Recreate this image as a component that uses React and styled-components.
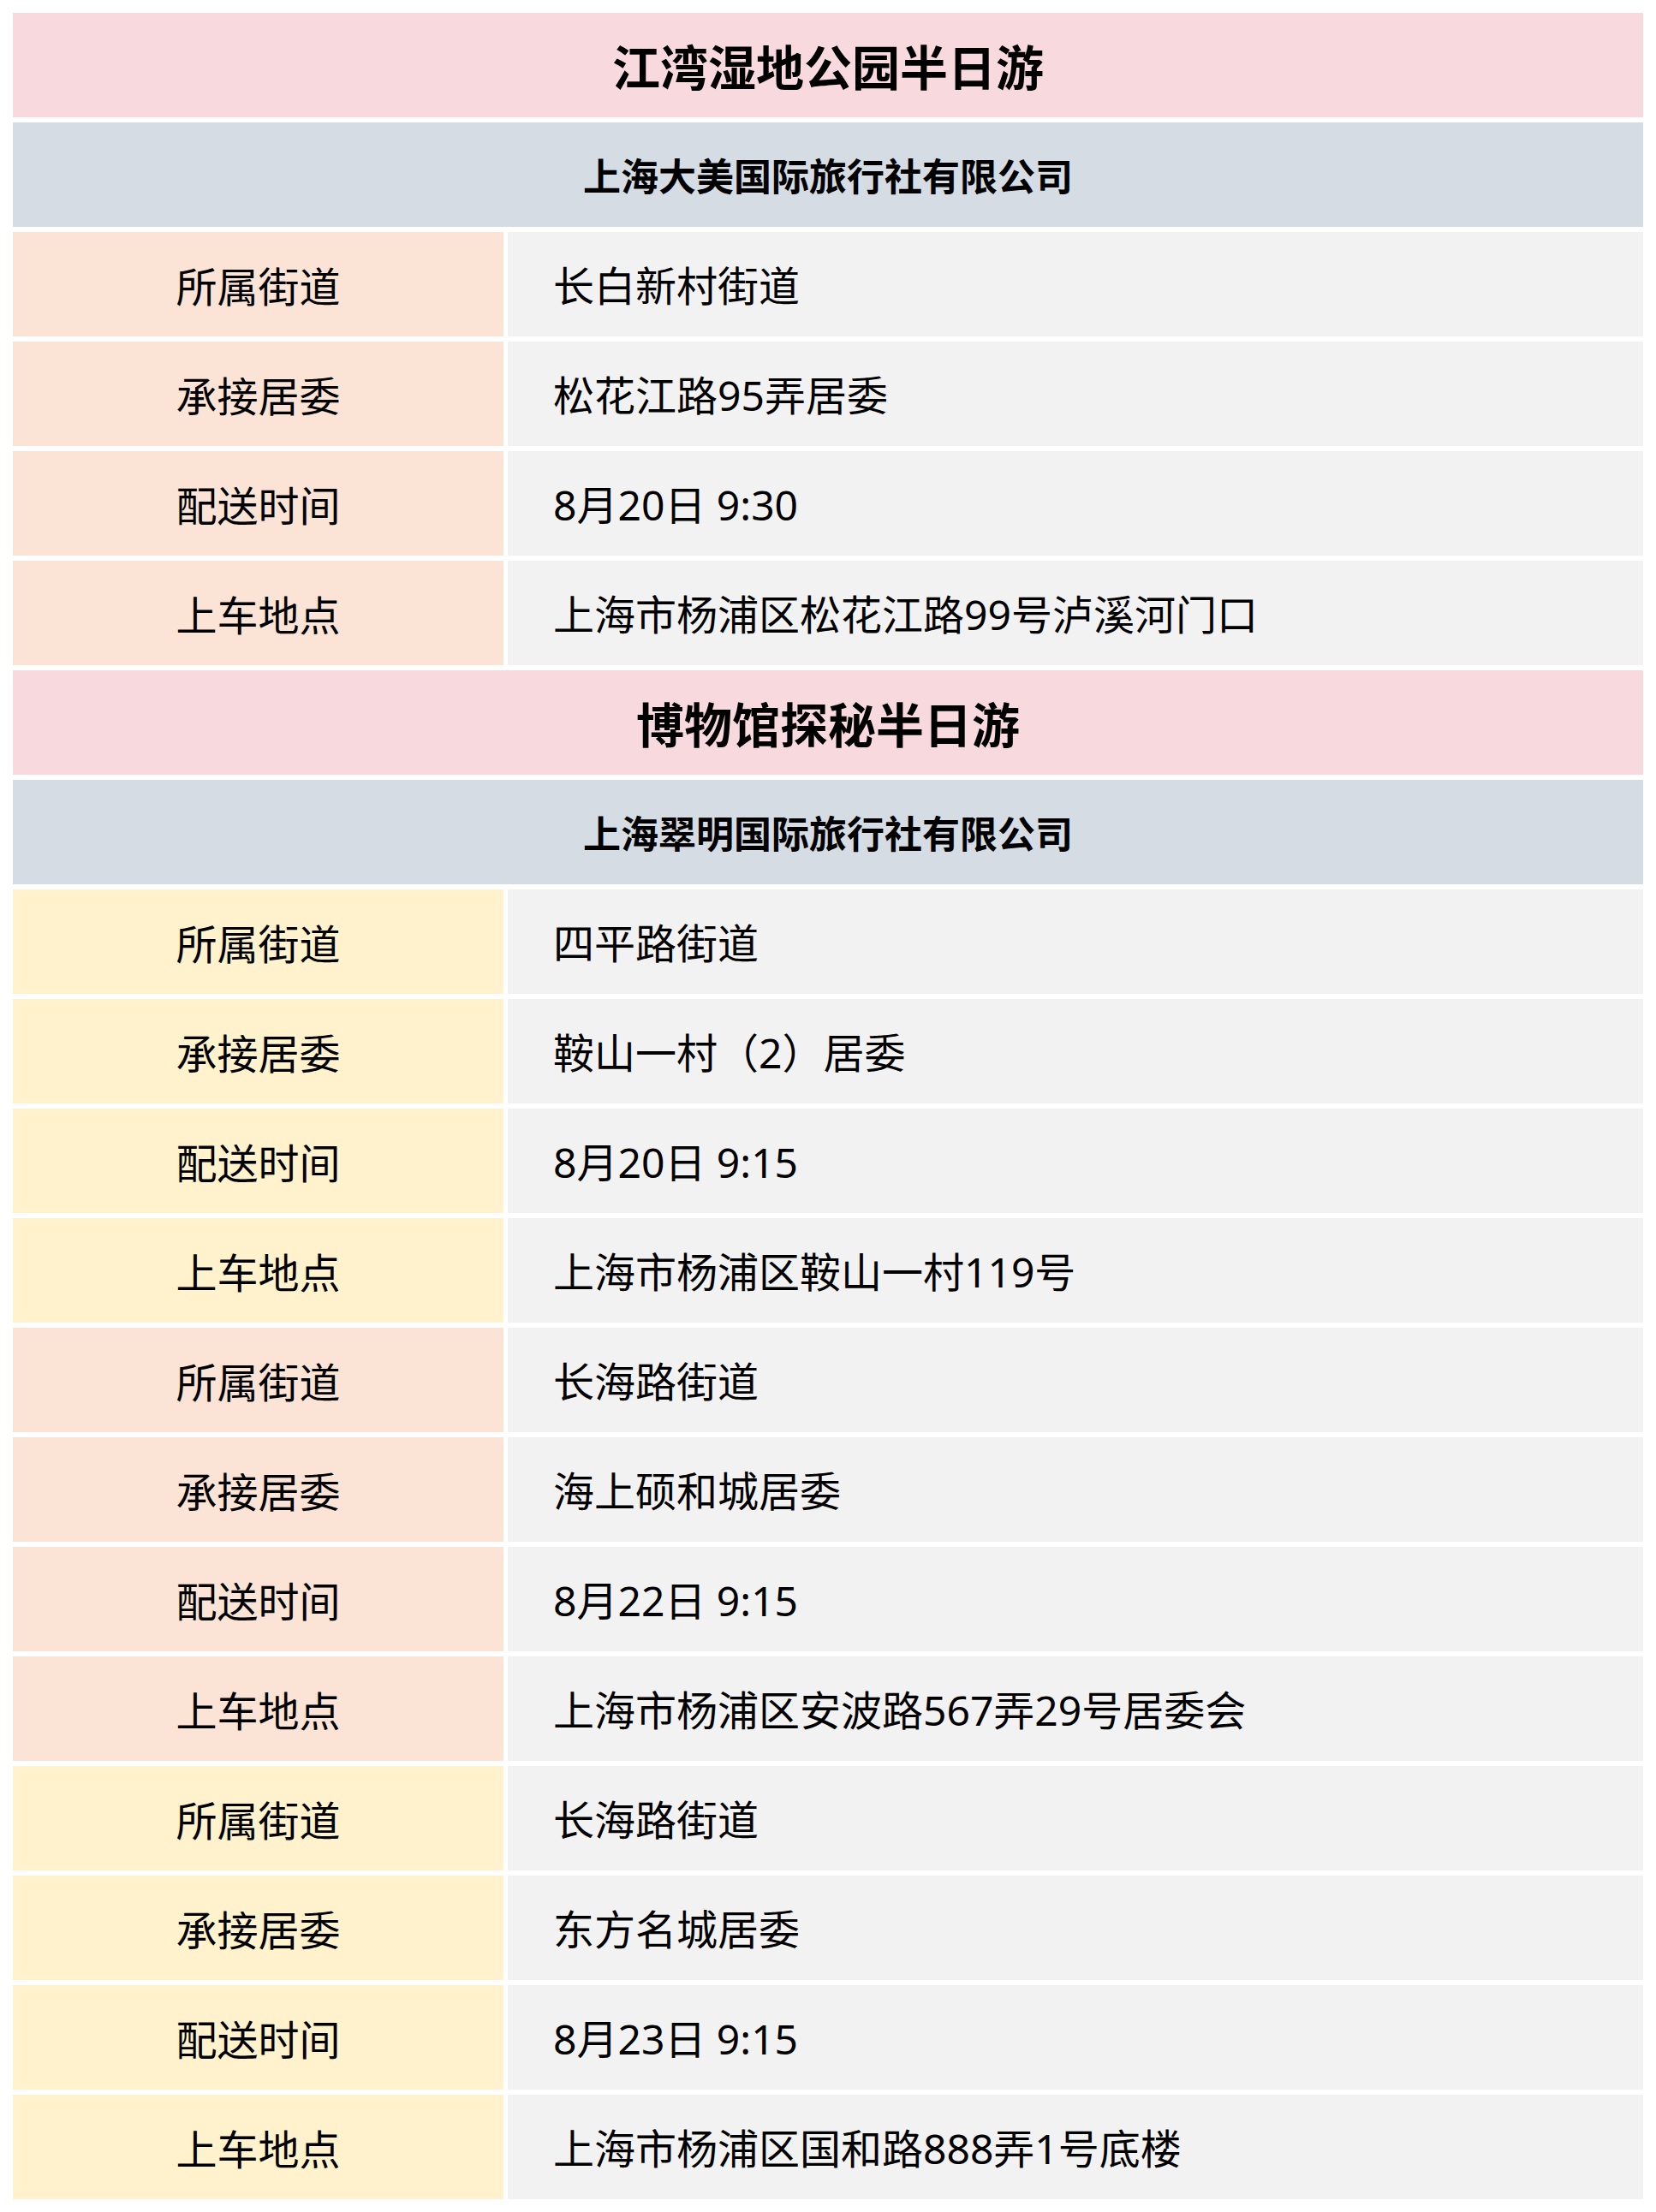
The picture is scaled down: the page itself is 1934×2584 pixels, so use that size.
import React from "react";
import styled, { createGlobalStyle } from "styled-components";

const GlobalStyle = createGlobalStyle`
  html, body {
    margin: 0;
    padding: 0;
    background: #ffffff;
  }
  body {
    font-family: "Noto Sans CJK SC", "Noto Sans", sans-serif;
    color: #000000;
  }
`;

const Page = styled.div`
  padding: 15px 15px 16px 15px;
`;

const Table = styled.div`
  display: grid;
  grid-template-columns: 573px 1fr;
  grid-auto-rows: 122px;
  column-gap: 5px;
  row-gap: 6px;
`;

const TitleRow = styled.div`
  grid-column: 1 / -1;
  display: flex;
  align-items: center;
  justify-content: center;
  background: #f8d9de;
  font-size: 56px;
  font-weight: 700;
  line-height: 1;
`;

const CompanyRow = styled.div`
  grid-column: 1 / -1;
  display: flex;
  align-items: center;
  justify-content: center;
  background: #d5dce4;
  font-size: 44px;
  font-weight: 700;
  line-height: 1;
`;

const Label = styled.div`
  display: flex;
  align-items: center;
  justify-content: center;
  background: ${(p) => (p.$tone === "yellow" ? "#fff2cc" : "#fbe3d5")};
  font-size: 48px;
  line-height: 1;
`;

const Value = styled.div`
  display: flex;
  align-items: center;
  padding: 4px 0 0 53px;
  background: #f2f2f2;
  font-family: "Noto Sans", "Noto Sans CJK SC", sans-serif;
  font-size: 48px;
  line-height: 1;
`;

const sections = [
  {
    title: "江湾湿地公园半日游",
    company: "上海大美国际旅行社有限公司",
    groups: [
      {
        tone: "peach",
        street: "长白新村街道",
        committee: "松花江路95弄居委",
        time: "8月20日 9:30",
        place: "上海市杨浦区松花江路99号泸溪河门口",
      },
    ],
  },
  {
    title: "博物馆探秘半日游",
    company: "上海翠明国际旅行社有限公司",
    groups: [
      {
        tone: "yellow",
        street: "四平路街道",
        committee: "鞍山一村（2）居委",
        time: "8月20日 9:15",
        place: "上海市杨浦区鞍山一村119号",
      },
      {
        tone: "peach",
        street: "长海路街道",
        committee: "海上硕和城居委",
        time: "8月22日 9:15",
        place: "上海市杨浦区安波路567弄29号居委会",
      },
      {
        tone: "yellow",
        street: "长海路街道",
        committee: "东方名城居委",
        time: "8月23日 9:15",
        place: "上海市杨浦区国和路888弄1号底楼",
      },
    ],
  },
];

function Group({ group }) {
  const rows = [
    ["所属街道", group.street],
    ["承接居委", group.committee],
    ["配送时间", group.time],
    ["上车地点", group.place],
  ];
  return rows.map(([label, value]) => (
    <React.Fragment key={label}>
      <Label $tone={group.tone}>{label}</Label>
      <Value>{value}</Value>
    </React.Fragment>
  ));
}

export default function App() {
  return (
    <>
      <GlobalStyle />
      <Page>
        <Table>
          {sections.map((section) => (
            <React.Fragment key={section.title}>
              <TitleRow>{section.title}</TitleRow>
              <CompanyRow>{section.company}</CompanyRow>
              {section.groups.map((group, i) => (
                <Group key={i} group={group} />
              ))}
            </React.Fragment>
          ))}
        </Table>
      </Page>
    </>
  );
}
